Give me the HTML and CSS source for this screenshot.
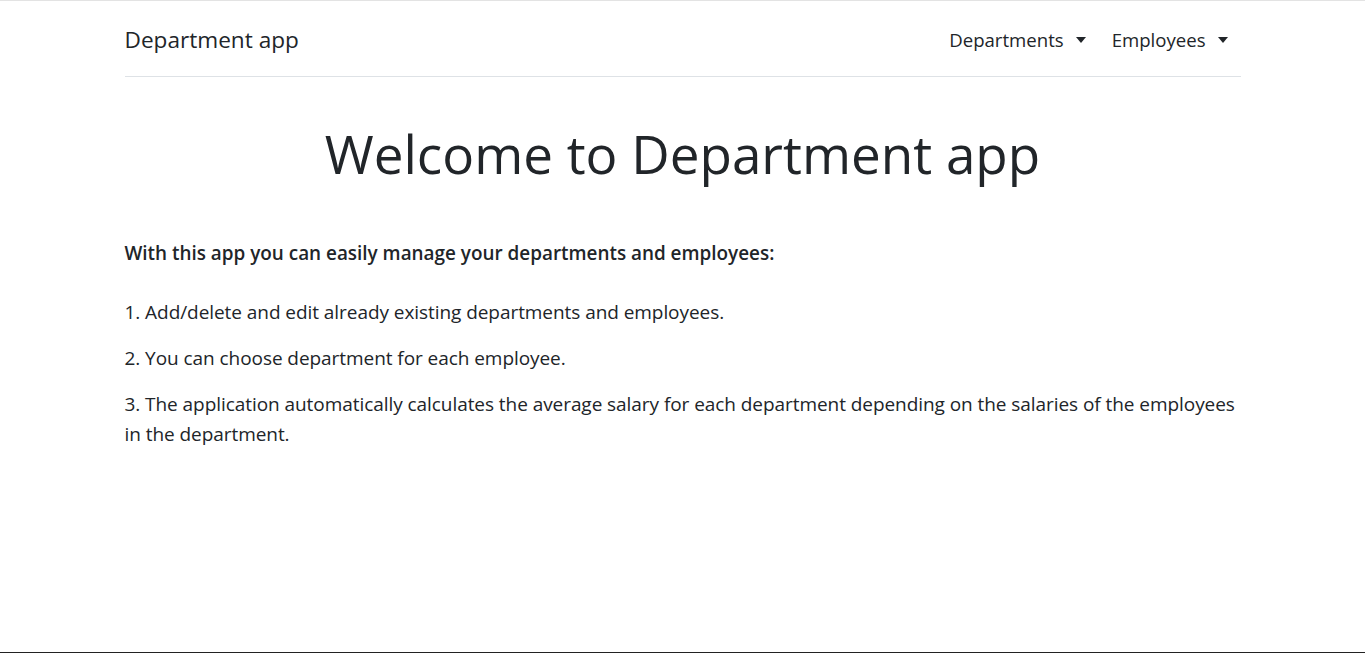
FILE: index.html
```html
<!DOCTYPE html>
<html lang="en">
<head>
<meta charset="utf-8">
<title>Department app</title>
<link rel="stylesheet" href="styles.css">
</head>
<body>
<div class="page">
  <div class="container">
    <header class="header">
      <a class="brand" href="#">Department app</a>
      <ul class="nav">
        <li><a class="nav-link" href="#">Departments<span class="caret"></span></a></li>
        <li><a class="nav-link" href="#">Employees<span class="caret"></span></a></li>
      </ul>
    </header>
    <main class="content">
      <h1 class="title">Welcome to Department app</h1>
      <p class="intro">With this app you can easily manage your departments and employees:</p>
      <p class="item">1. Add/delete and edit already existing departments and employees.</p>
      <p class="item">2. You can choose department for each employee.</p>
      <p class="item">3. The application automatically calculates the average salary for each department depending on the salaries of the employees in the department.</p>
    </main>
  </div>
</div>
</body>
</html>
```

FILE: styles.css
```css
* { box-sizing: border-box; }
html, body { margin: 0; padding: 0; }
body {
  font-family: "Segoe UI", "Open Sans", "Noto Sans", sans-serif;
  color: #212529;
  background: #fff;
}
.page {
  min-height: 100vh;
  border-top: 1px solid #e3e3e3;
  border-bottom: 1px solid #222;
}
.container {
  width: 1140px;
  margin: 0 auto;
  padding: 0 12px;
}
.header {
  display: flex;
  align-items: center;
  justify-content: space-between;
  height: 76px;
  padding-top: 3px;
  border-bottom: 1px solid #dee2e6;
}
.brand {
  font-size: 22.6px;
  color: #212529;
  text-decoration: none;
  line-height: 36px;
}
.nav {
  display: flex;
  list-style: none;
  margin: 0 -1px 0 0;
  padding: 0;
}
.nav-link {
  display: flex;
  align-items: center;
  padding: 8px 14px 8px 12px;
  font-size: 18.6px;
  line-height: 24px;
  color: #212529;
  text-decoration: none;
}
.caret {
  display: inline-block;
  margin-left: 12px;
  width: 0;
  height: 0;
  border-top: 6px solid #212529;
  border-left: 5.5px solid transparent;
  border-right: 5.5px solid transparent;
}
.title {
  margin: 39px 0 0;
  text-align: center;
  font-size: 53px;
  font-weight: 400;
  line-height: 76px;
}
.intro {
  margin: 47px 0 30px;
  font-weight: 600;
  font-size: 18.9px;
  line-height: 28px;
}
.item {
  margin: 0 0 16px;
  font-size: 19px;
  line-height: 30px;
  letter-spacing: -0.06px;
}
```
